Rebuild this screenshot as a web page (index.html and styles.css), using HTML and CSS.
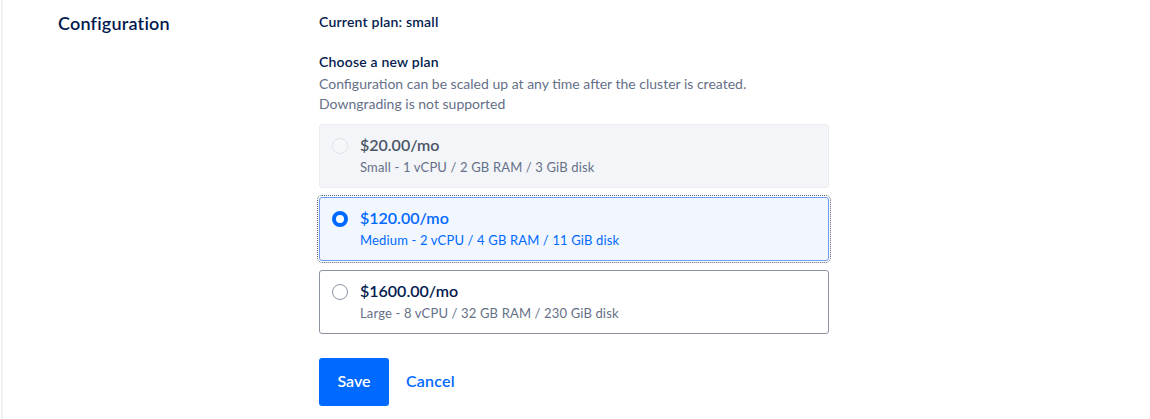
FILE: index.html
```html
<!DOCTYPE html>
<html lang="en">
<head>
    <meta charset="UTF-8">
    <title>Configuration</title>
    <link rel="stylesheet" href="styles.css">
</head>
<body>
    <div class="panel">
        <div class="section-title">Configuration</div>
        <div class="section-body">
            <div class="current-plan">Current plan: small</div>

            <div class="choose-title">Choose a new plan</div>
            <div class="help">Configuration can be scaled up at any time after the cluster is created.</div>
            <div class="help">Downgrading is not supported</div>

            <div class="plans">
                <div class="plan disabled">
                    <span class="radio"></span>
                    <div class="plan-text">
                        <div class="price">$20.00/mo</div>
                        <div class="spec">Small - 1 vCPU / 2 GB RAM / 3 GiB disk</div>
                    </div>
                </div>
                <div class="plan selected">
                    <span class="radio"></span>
                    <div class="plan-text">
                        <div class="price">$120.00/mo</div>
                        <div class="spec">Medium - 2 vCPU / 4 GB RAM / 11 GiB disk</div>
                    </div>
                </div>
                <div class="plan">
                    <span class="radio"></span>
                    <div class="plan-text">
                        <div class="price">$1600.00/mo</div>
                        <div class="spec">Large - 8 vCPU / 32 GB RAM / 230 GiB disk</div>
                    </div>
                </div>
            </div>

            <div class="actions">
                <button class="save-btn">Save</button>
                <a class="cancel-link">Cancel</a>
            </div>
        </div>
    </div>
</body>
</html>
```

FILE: styles.css
```css
body {
    margin: 0;
    background: #fff;
    font-family: Lato, "Open Sans", sans-serif;
    color: #031b4e;
}
.panel {
    display: flex;
    border-left: 2px solid #f1f2f4;
    margin-left: 1px;
    min-height: 419px;
    box-sizing: border-box;
    padding-top: 12px;
}
.section-title {
    width: 316px;
    padding-left: 55px;
    box-sizing: border-box;
    font-size: 18px;
    font-weight: 600;
    line-height: 22px;
    letter-spacing: 0.2px;
}
.section-body {
    width: 510px;
}
.current-plan,
.choose-title {
    font-size: 14px;
    font-weight: 600;
    line-height: 20px;
    letter-spacing: 0.2px;
}
.current-plan {
    margin-bottom: 20px;
}
.choose-title {
    margin-bottom: 2px;
}
.help {
    font-size: 14px;
    color: #657087;
    line-height: 20px;
}
.plans {
    display: flex;
    flex-direction: column;
    gap: 9px;
    margin-top: 10px;
}
.plan {
    display: flex;
    align-items: flex-start;
    height: 64px;
    box-sizing: border-box;
    border: 1px solid #8b93a5;
    border-radius: 3px;
    padding: 9px 14px 0 12px;
    background: #fff;
}
.plan.disabled {
    background: #f3f5f9;
    border-color: #e8ebf0;
}
.plan.selected {
    background: #f1f6ff;
    border-color: #6c9cf3;
    outline: 1px dotted #59606e;
    outline-offset: 1px;
}
.radio {
    width: 16px;
    height: 16px;
    box-sizing: border-box;
    border-radius: 50%;
    border: 1.5px solid #8c96a8;
    background: #fff;
    margin-top: 4px;
    margin-right: 12px;
    flex: none;
}
.disabled .radio {
    border-color: #dfe3ea;
    background: #f6f7f9;
}
.selected .radio {
    border: 4px solid #0069ff;
}
.price {
    font-size: 16px;
    font-weight: 600;
    line-height: 22px;
}
.spec {
    font-size: 13px;
    line-height: 20px;
    color: #657087;
    margin-top: 1px;
    letter-spacing: 0.15px;
}
.disabled .price {
    color: #4b5568;
}
.selected .price,
.selected .spec {
    color: #0069ff;
}
.actions {
    display: flex;
    align-items: center;
    gap: 17px;
    margin-top: 24px;
}
.save-btn {
    width: 70px;
    height: 48px;
    border: none;
    border-radius: 3px;
    background: #0069ff;
    color: #fff;
    font-family: inherit;
    font-size: 16px;
    font-weight: 600;
    line-height: 20px;
    padding: 0 0 3px;
}
.cancel-link {
    color: #0069ff;
    font-size: 16px;
    font-weight: 600;
    letter-spacing: 0.2px;
    line-height: 20px;
    margin-top: -3px;
}
```
